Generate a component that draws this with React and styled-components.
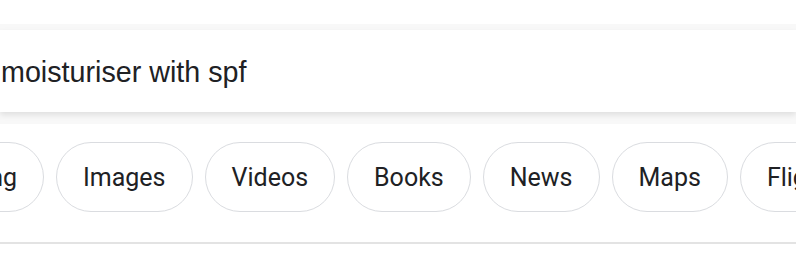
import React from "react";
import styled, { createGlobalStyle } from "styled-components";

const GlobalStyle = createGlobalStyle`
  html, body {
    margin: 0;
    padding: 0;
    background: #fff;
    overflow: hidden;
  }
`;

const tabs = ["Images", "Videos", "Books", "News", "Maps", "Flights"];

export default function App() {
  return (
    <>
      <GlobalStyle />
      <Page>
        <SearchBand>
          <SearchBox>
            <Query>moisturiser with spf</Query>
          </SearchBox>
        </SearchBand>

        <TabRow>
          <Clip>
            <Pill>Shopping</Pill>
          </Clip>
          {tabs.map((t) => (
            <Pill key={t}>{t}</Pill>
          ))}
        </TabRow>

        <Divider />
      </Page>
    </>
  );
}

const Page = styled.div`
  width: 796px;
  height: 253px;
  padding-top: 24px;
  box-sizing: border-box;
  overflow: hidden;
`;

const SearchBand = styled.div`
  background: #f8f8f8;
  padding: 6px 0 12px;
`;

const SearchBox = styled.div`
  height: 82px;
  background: #fff;
  display: flex;
  align-items: center;
  box-shadow: 0 3px 6px rgba(0, 0, 0, 0.1);
`;

const Query = styled.span`
  font-family: "Liberation Sans", Arial, sans-serif;
  font-size: 28.7px;
  color: #202124;
  margin-left: 1px;
  padding-top: 2px;
  white-space: nowrap;
`;

const TabRow = styled.div`
  display: flex;
  gap: 12px;
  padding-top: 18px;
  height: 70px;
  white-space: nowrap;
`;

/* holds the pill scrolled half out of view on the left */
const Clip = styled.div`
  flex: 0 0 44px;
  min-width: 0;
  display: flex;
  justify-content: flex-end;
`;

const Pill = styled.div`
  flex: 0 0 auto;
  height: 70px;
  box-sizing: border-box;
  padding: 0 26px;
  border: 1px solid #dadce0;
  border-radius: 35px;
  display: flex;
  align-items: center;
  font-family: Roboto, "Noto Sans", sans-serif;
  font-size: 25px;
  color: #202124;
`;

const Divider = styled.div`
  margin-top: 30px;
  height: 2px;
  background: #e3e3e3;
`;
